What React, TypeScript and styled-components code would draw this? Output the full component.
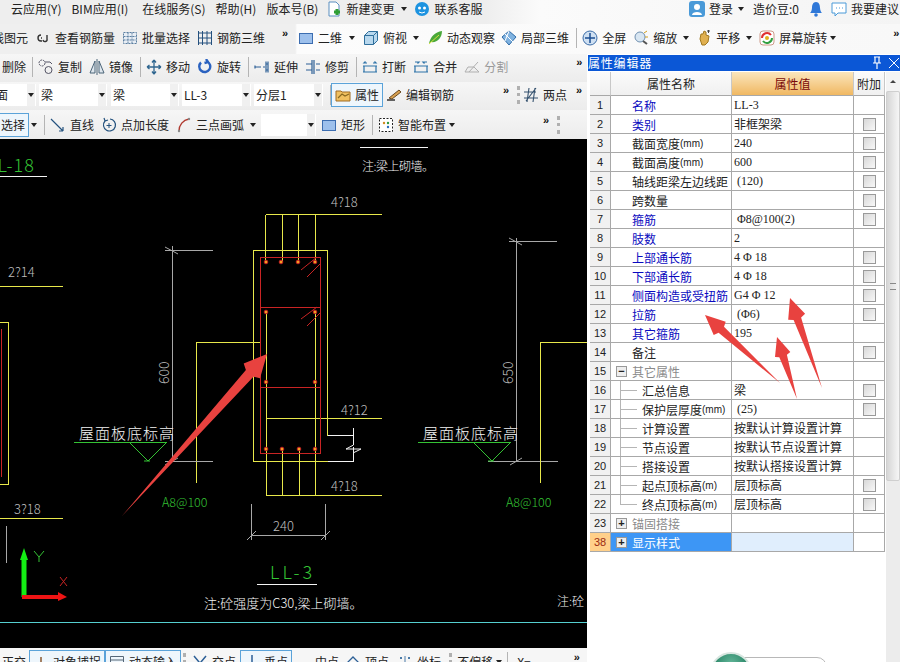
import React from "react";
import styled, { createGlobalStyle } from "styled-components";

const Global = createGlobalStyle`
  html, body { margin: 0; padding: 0; background: #fff; }
  body { font-family: "Noto Sans CJK SC", "Liberation Sans", sans-serif; font-size: 12px; color: #222; }
`;

const Page = styled.div`
  position: relative;
  width: 900px;
  height: 662px;
  overflow: hidden;
  background: #fff;
`;

const BarRow = styled.div<{ $h: number; $pb?: number; $bg?: string }>`
  display: flex;
  align-items: center;
  box-sizing: border-box;
  flex: none;
  height: ${(p) => p.$h}px;
  padding-bottom: ${(p) => p.$pb ?? 0}px;
  background: ${(p) => p.$bg ?? "linear-gradient(180deg,#f6f6f6,#ececec)"};
  white-space: nowrap;
  line-height: 16px;
`;

const RightGroup = styled.div`
  display: flex;
  align-items: center;
  margin-left: auto;
  padding-right: 1px;
`;

const ToolBtn = styled.div<{ $ml?: number; $pressed?: boolean; $muted?: boolean }>`
  display: inline-flex;
  flex: none;
  align-items: center;
  gap: 4px;
  box-sizing: border-box;
  margin-left: ${(p) => p.$ml ?? 0}px;
  color: ${(p) => (p.$muted ? "#9a9a9a" : "#222")};
  ${(p) =>
    p.$pressed
      ? "height:24px;padding:0 3px;border:1px solid #5ba3d9;background:#eef6fc;"
      : ""}
`;

const Caret = styled.span<{ $ml?: number }>`
  flex: none;
  width: 0;
  height: 0;
  margin-left: ${(p) => p.$ml ?? 0}px;
  border-left: 3px solid transparent;
  border-right: 3px solid transparent;
  border-top: 4px solid #222;
`;

const Chevron = styled.span<{ $ml?: number }>`
  flex: none;
  width: 8px;
  margin-left: ${(p) => p.$ml ?? 0}px;
  margin-bottom: 10px;
  font: bold 11px/10px "Liberation Sans", sans-serif;
  color: #111;
`;

const Sep = styled.span<{ $ml?: number }>`
  flex: none;
  width: 1px;
  height: 20px;
  margin-left: ${(p) => p.$ml ?? 0}px;
  background: #b4b4b4;
`;

const Grip = styled.span<{ $ml?: number }>`
  flex: none;
  width: 0;
  height: 18px;
  margin-left: ${(p) => p.$ml ?? 0}px;
  border-left: 3px dotted #b0b0b0;
`;

const Combo = styled.div<{ $ml?: number; $w: number }>`
  display: flex;
  flex: none;
  align-items: center;
  justify-content: space-between;
  box-sizing: border-box;
  width: ${(p) => p.$w}px;
  height: 22px;
  margin-left: ${(p) => p.$ml ?? 0}px;
  padding: 0 1px 0 2px;
  background: #fff;
`;

const ComboArrow = styled.span`
  display: flex;
  flex: none;
  align-items: center;
  justify-content: center;
  width: 8px;
  height: 22px;
  background: #f0f0f0;
`;

const Body = styled.div`
  display: flex;
  height: 608px;
`;

const LeftCol = styled.div`
  display: flex;
  flex: none;
  flex-direction: column;
  width: 587px;
`;

const CanvasBox = styled.div`
  flex: none;
  height: 509px;
  background: #000;
  overflow: hidden;
`;

const CadSvg = styled.svg`
  display: block;
  width: 587px;
  height: 509px;
`;

const CadText = styled.text<{ $c?: string; $s?: number; $ls?: number }>`
  fill: ${(p) => p.$c ?? "#bdbdbd"};
  font-family: "Noto Sans CJK SC", "Liberation Sans", sans-serif;
  font-size: ${(p) => p.$s ?? 13}px;
  font-weight: 300;
  letter-spacing: ${(p) => p.$ls ?? 0}px;
`;

const Panel = styled.div`
  display: flex;
  flex: none;
  flex-direction: column;
  width: 313px;
  padding: 1px 0 0 1px;
  box-sizing: border-box;
  background: #fff;
`;

const TitleBar = styled.div`
  display: flex;
  flex: none;
  align-items: center;
  justify-content: space-between;
  height: 16px;
  background: #0b57d6;
  color: #fff;
  font-size: 12px;
  line-height: 16px;
  letter-spacing: 0.8px;
  overflow: hidden;
`;

const TitleIcons = styled.div`
  display: flex;
  align-items: center;
  gap: 1px;
  margin-right: -2px;
`;

const PanelBody = styled.div`
  display: flex;
  flex: 1;
  margin-top: 1px;
  min-height: 0;
`;

const TableWrap = styled.div`
  flex: none;
  width: 297px;
  padding-left: 2px;
  box-sizing: border-box;
`;

const Row = styled.div<{ $h: number }>`
  display: grid;
  grid-template-columns: 21px 121px 122px 31px;
  height: ${(p) => p.$h}px;
`;

const NumCell = styled.div<{ $sel?: boolean; $head?: boolean }>`
  display: flex;
  align-items: center;
  justify-content: center;
  box-sizing: border-box;
  border-bottom: 1px solid #a8a8a8;
  border-right: 1px solid #a8a8a8;
  background: ${(p) => (p.$sel ? "#ffd08a" : "#f1f1f1")};
  color: ${(p) => (p.$sel ? "#9a2a10" : "#222")};
  font-family: "Liberation Sans", sans-serif;
  font-size: 11px;
`;

const NameCell = styled.div<{ $kind: string; $tree?: boolean; $last?: boolean; $sel?: boolean; $group?: boolean }>`
  position: relative;
  display: flex;
  align-items: center;
  box-sizing: border-box;
  padding-left: ${(p) => (p.$tree ? 31 : p.$group ? 5 : 21)}px;
  border-bottom: 1px solid #a8a8a8;
  border-right: 1px solid #a8a8a8;
  white-space: nowrap;
  background: ${(p) => (p.$sel ? "#3d96f5" : "#fff")};
  color: ${(p) =>
    p.$sel ? "#fff" : p.$kind === "blue" ? "#0a0ac0" : p.$kind === "gray" ? "#8a8a8a" : "#222"};
  ${(p) =>
    p.$tree
      ? `
    &::before { content:""; position:absolute; left:9px; top:0; height:${p.$last ? "50%" : "100%"}; border-left:1px solid #b5b5b5; }
    &::after { content:""; position:absolute; left:9px; top:50%; width:17px; border-top:1px solid #b5b5b5; }
  `
      : ""}
`;

const Unit = styled.span`
  font-family: "Liberation Sans", sans-serif;
  font-size: 10px;
`;

const ValCell = styled.div<{ $sel?: boolean }>`
  display: flex;
  align-items: center;
  box-sizing: border-box;
  padding-left: 2px;
  border-bottom: 1px solid #a8a8a8;
  border-right: 1px solid #a8a8a8;
  white-space: pre;
  font-family: "Liberation Serif", "Noto Sans CJK SC", serif;
  font-size: 12px;
  background: ${(p) => (p.$sel ? "#e0eefd" : "#fff")};
`;

const AddCell = styled.div`
  display: flex;
  align-items: center;
  justify-content: center;
  box-sizing: border-box;
  border-bottom: 1px solid #a8a8a8;
  border-right: 1px solid #a8a8a8;
`;

const Check = styled.span`
  box-sizing: border-box;
  width: 13px;
  height: 13px;
  border: 1px solid #9a9a9a;
  background: linear-gradient(135deg, #d8d8d8, #f8f8f8);
`;

const HeadCell = styled.div<{ $val?: boolean }>`
  display: flex;
  align-items: center;
  justify-content: center;
  box-sizing: border-box;
  border-bottom: 1px solid #a8a8a8;
  border-right: 1px solid #c8c8c8;
  background: ${(p) => (p.$val ? "linear-gradient(180deg,#fbe6bd,#f0b862)" : "linear-gradient(180deg,#fbfbfb,#f0f0f0)")};
  color: ${(p) => (p.$val ? "#7a0a0a" : "#222")};
`;

const ExpandBox = styled.span`
  display: flex;
  flex: none;
  align-items: center;
  justify-content: center;
  box-sizing: border-box;
  width: 11px;
  height: 11px;
  margin-right: 5px;
  border: 1px solid #999;
  background: #eee;
  color: #222;
  font: bold 11px/9px "Liberation Sans", sans-serif;
`;

const Scroll = styled.div`
  display: flex;
  flex: 1;
  flex-direction: column;
  margin-left: 1px;
  background: #ececec;
`;

const ScrollBtn = styled.div`
  display: flex;
  flex: none;
  align-items: center;
  justify-content: center;
  height: 19px;
  background: #f4f4f4;
`;

const ScrollUp = styled.span`
  width: 0;
  height: 0;
  border-left: 3px solid transparent;
  border-right: 3px solid transparent;
  border-bottom: 3px solid #444;
`;

const ScrollThumb = styled.div`
  display: flex;
  flex: none;
  align-items: center;
  justify-content: center;
  height: 390px;
  box-sizing: border-box;
  border: 1px solid #cfcfcf;
  border-radius: 2px;
  background: linear-gradient(90deg, #d6d6d6, #f6f6f6);
`;

const ThumbGrip = styled.span`
  width: 6px;
  height: 5px;
  border-top: 1px solid #888;
  border-bottom: 1px solid #888;
`;

const BallWidget = styled.div`
  position: absolute;
  left: 725px;
  top: 657px;
  width: 102px;
  height: 20px;
  box-sizing: border-box;
  border: 1px solid #b8b8b8;
  border-radius: 10px;
  background: #fff;
`;

const Ball = styled.div`
  position: absolute;
  left: 710px;
  top: 652px;
  width: 42px;
  height: 42px;
  box-sizing: border-box;
  border: 2px solid #d8e6e0;
  border-radius: 50%;
  background: radial-gradient(circle at 50% 25%, #62b598, #1f7d5e 60%);
`;

const Overlay = styled.svg`
  position: absolute;
  left: 0;
  top: 0;
  width: 900px;
  height: 662px;
  pointer-events: none;
`;

const IcoSvg = styled.svg`
  display: block;
  flex: none;
  width: 16px;
  height: 16px;
`;

const icons: Record<string, React.ReactNode> = {
  doc: (<><path d="M3 1h7l3 3v11H3z" fill="#fff" stroke="#5a8fc0" /><path d="M8 11h6M11 8v6" stroke="#2f9e35" strokeWidth="3" /></>),
  smile: (<><circle cx="8" cy="8" r="7" fill="#1d93e0" /><circle cx="5.5" cy="7" r="1.5" fill="#fff" /><circle cx="10.5" cy="7" r="1.5" fill="#fff" /><path d="M5 11q3 2 6 0" stroke="#fff" fill="none" /></>),
  link: (<path d="M6 5a3 3 0 1 0 0 6h1M6 8h1M12 5v4a2 2 0 0 1-4 1" fill="none" stroke="#333" strokeWidth="1.4" />),
  batch: (<path d="M1.500 2.500h13v11h-13zM1.500 6.500h13M1.500 10h13M6 2.500v11M10 2.500v11" fill="#e8eef5" stroke="#5a7ea0" strokeDasharray="2 1" />),
  rebar: (<path d="M1.500 3h13M1.500 13h13M1.500 1v14M5.500 1v14M10 1v14M14.500 1v14M1.500 8h13" fill="none" stroke="#24507e" />),
  plane: (<rect x="1.500" y="3.500" width="13" height="10" fill="#9dc0ec" stroke="#3c6db0" />),
  cube: (<><path d="M1.500 5.500l4-4h9v9l-4 4h-9z" fill="#b8d8ee" stroke="#2f6f9c" /><path d="M1.500 5.500h9v9M10.500 5.500l4-4" fill="none" stroke="#2f6f9c" /></>),
  orbit: (<><path d="M2 14C3 7 8 2 15 1c0 7-5 12-11 11z" fill="#4aa83a" /><path d="M2 14L12 5" stroke="#d8e040" /></>),
  local3d: (<><path d="M8 1l7 6-7 8-7-8z" fill="#7fb2e0" stroke="#2f6ca8" /><path d="M4 4l8 8M8 1l-4 10" stroke="#fff" /></>),
  full: (<><circle cx="8" cy="8" r="7" fill="#cfe0f2" stroke="#3c6da8" /><path d="M8 3v10M3 8h10" stroke="#1c4d92" strokeWidth="1.500" /></>),
  zoom: (<><circle cx="7" cy="7" r="5" fill="#d8e6f2" stroke="#7090b0" /><path d="M11 3l3-2M12 7h3" stroke="#d0a020" /><path d="M10 11l4 3" stroke="#555" strokeWidth="2" /></>),
  pan: (<><path d="M4 9l1-5 2 0 1-3 2 1 0 3 3 1-1 6-3 3H6z" fill="#e0b050" stroke="#a07820" /><path d="M11 1h3M12.500 0v3" stroke="#444" /></>),
  spin: (<><rect x="1" y="1" width="14" height="14" rx="3" fill="#fff" stroke="#c98" /><path d="M3 8a5 5 0 0 1 9-3" stroke="#e03030" strokeWidth="2" fill="none" /><path d="M13 8a5 5 0 0 1-9 3" stroke="#30a040" strokeWidth="2" fill="none" /><circle cx="8" cy="8" r="2" fill="#e0b020" /></>),
  copy: (<><circle cx="4" cy="4" r="3" fill="none" stroke="#556" strokeDasharray="2 1" /><circle cx="10.500" cy="11" r="3.500" fill="none" stroke="#556" /><path d="M7 3h5l2 2" stroke="#556" fill="none" /></>),
  mirror: (<><path d="M6 2L1 14h5zM10 2l5 12h-5z" fill="#dfe7ee" stroke="#4b6478" /><path d="M8 0v16" stroke="#4b6478" /></>),
  move: (<path d="M8 1v14M1 8h14M8 1L6 3.500M8 1l2 2.500M8 15l-2-2.500M8 15l2-2.500M1 8l2.500-2M1 8l2.500 2M15 8l-2.500-2M15 8l-2.500 2" fill="none" stroke="#2f6690" strokeWidth="1.300" />),
  rotate: (<path d="M4 3.500a5.500 5.500 0 1 0 6-1M9 0l2 3-3.500 1" fill="none" stroke="#2a62c0" strokeWidth="2.400" />),
  extend: (<path d="M1 8h6M9 8h2M12 2.500v11M14 2.500v11M12 5h2M12 11h2M1 6.500v3" fill="none" stroke="#2c5f96" strokeWidth="1.200" />),
  trim: (<path d="M1 5h6M1 11h6M7 1v14M9 1v14M11 5h4M11 11h4" fill="none" stroke="#2c5f96" strokeWidth="1.200" />),
  cut: (<path d="M1 7h14M1 13h14M5 4h-3l1.500-1.500M11 4h3l-1.500-1.500M2 7v6M14 7v6" fill="none" stroke="#2c72a8" strokeWidth="1.200" />),
  merge: (<path d="M1 7h14M1 13h14M2 3h4l-1.500 1.500M14 3h-4l1.500 1.500M2 7v6M14 7v6" fill="none" stroke="#2c72a8" strokeWidth="1.200" />),
  split: (<path d="M1 13h14l-5-5H4zM5 13L14 3" fill="#eee" stroke="#b0b0b0" />),
  prop: (<><path d="M1 4h5l1 1h8v9H1z" fill="#f0c060" stroke="#a06a20" /><path d="M3 11l4-4 3 2 4-2" stroke="#8a6a20" fill="none" strokeWidth="1.200" /></>),
  edit: (<><path d="M1 13h8" stroke="#333" strokeWidth="1.500" /><path d="M3 11L13 3l2 2L6 12z" fill="#d8a050" stroke="#6a4a20" /></>),
  two: (<path d="M1 11h14M1 5h12M4 15L6 1M10 15l2-14M13 1L3 14" fill="none" stroke="#34516e" strokeWidth="1.100" />),
  line: (<path d="M1 2l12 12M13 14v-4M13 14H9" fill="none" stroke="#24527e" strokeWidth="1.200" />),
  addlen: (<><path d="M4 4a6 6 0 1 0 5-2M3 1l1 3 3-1" fill="none" stroke="#24527e" strokeWidth="1.200" /><path d="M8 6v5M5.500 8.500h5" stroke="#24527e" /></>),
  arc: (<><path d="M3 14C3 8 7 3 13 2" fill="none" stroke="#b03a30" strokeWidth="1.400" /><circle cx="13" cy="2" r="1.200" fill="#8a8a8a" /><circle cx="3" cy="14" r="1.200" fill="#8a8a8a" /></>),
  smart: (<><rect x="1.500" y="1.500" width="13" height="13" fill="#fff" stroke="#222" strokeDasharray="2 1.500" /><circle cx="6" cy="6" r="1.200" fill="#d08a20" /><circle cx="10" cy="10" r="1.200" fill="#2a6cc0" /><circle cx="10" cy="6" r="1.200" fill="#2a9a40" /></>),
  user: (<><rect x="0" y="0" width="16" height="16" rx="3" fill="#4a9ad8" /><circle cx="8" cy="6" r="3" fill="#fff" /><path d="M3 14c0-4 10-4 10 0z" fill="#fff" /></>),
  bell: (<><path d="M8 1c-3 0-4 3-4 6s-2 5-2 5h12s-2-2-2-5-1-6-4-6z" fill="#2f78d8" /><circle cx="8" cy="14" r="1.800" fill="#2f78d8" /></>),
  chat: (<><path d="M1 2h14v10H7l-3 3v-3H1z" fill="#fff" stroke="#4a9ad8" /><path d="M5 7h1M8 7h1M11 7h1" stroke="#4a9ad8" /></>),
  snap: (<path d="M1 14h14M8 3v11M3 10h3M10 10h3" fill="none" stroke="#8a5a30" strokeWidth="1.500" />),
  input: (<path d="M1.500 2.500h13v11h-13zM1.500 6h13M1.500 9.500h13" fill="none" stroke="#567" />),
  cross: (<path d="M2 2l5 6-5 6M14 2L9 8l5 6" fill="none" stroke="#2c5f96" strokeWidth="1.500" />),
  perp: (<path d="M8 1v12M2 13h12" fill="none" stroke="#2c5f96" strokeWidth="1.500" />),
  mid: (<><path d="M1 11h14" stroke="#2c5f96" /><rect x="5" y="9" width="6" height="5" fill="#2c5f96" /></>),
  vertex: (<path d="M2 9l6-6 6 6v5H2z" fill="none" stroke="#2c5f96" strokeWidth="1.300" />),
  coord: (<path d="M8 2v12M3 14h10M3 3l2 2M5 3L3 5M11 3l2 2M13 3l-2 2" fill="none" stroke="#4a7aa8" />),
  pin: (<path d="M5 2h6M6 2v6M10 2v6M4 8h8M8 8v6" fill="none" stroke="#fff" strokeWidth="1.200" />),
  close: (<path d="M3 3l10 10M13 3L3 13" fill="none" stroke="#fff" strokeWidth="1" />),
};

const Ico = ({ n }: { n: string }) => <IcoSvg viewBox="0 0 16 16">{icons[n]}</IcoSvg>;

type ToolProps = { ml?: number; ic?: string; t?: string; pressed?: boolean; muted?: boolean };
const Tool = ({ ml, ic, t, pressed, muted }: ToolProps) => (
  <ToolBtn $ml={ml} $pressed={pressed} $muted={muted}>
    {ic && <Ico n={ic} />}
    {t && <span>{t}</span>}
  </ToolBtn>
);

const ComboBox = ({ ml, w, t }: { ml?: number; w: number; t?: string }) => (
  <Combo $ml={ml} $w={w}>
    <span>{t}</span>
    <ComboArrow>
      <Caret />
    </ComboArrow>
  </Combo>
);

type Prop = { v?: string; k?: string; c?: boolean; tree?: boolean; last?: boolean; group?: string; sel?: boolean; u?: string };
const rows: [string, string, Prop][] = [
  ["1", "名称", { v: "LL-3", k: "blue" }],
  ["2", "类别", { v: "非框架梁", k: "blue", c: true }],
  ["3", "截面宽度", { v: "240", c: true, u: "(mm)" }],
  ["4", "截面高度", { v: "600", c: true, u: "(mm)" }],
  ["5", "轴线距梁左边线距", { v: " (120)", c: true }],
  ["6", "跨数量", { c: true }],
  ["7", "箍筋", { v: " Φ8@100(2)", k: "blue", c: true }],
  ["8", "肢数", { v: "2", k: "blue" }],
  ["9", "上部通长筋", { v: "4 Φ 18", k: "blue", c: true }],
  ["10", "下部通长筋", { v: "4 Φ 18", k: "blue", c: true }],
  ["11", "侧面构造或受扭筋", { v: "G4 Φ 12", k: "blue", c: true }],
  ["12", "拉筋", { v: " (Φ6)", k: "blue", c: true }],
  ["13", "其它箍筋", { v: "195", k: "blue" }],
  ["14", "备注", { c: true }],
  ["15", "其它属性", { k: "gray", group: "−" }],
  ["16", "汇总信息", { v: "梁", c: true, tree: true }],
  ["17", "保护层厚度", { v: " (25)", c: true, tree: true, u: "(mm)" }],
  ["18", "计算设置", { v: "按默认计算设置计算", tree: true }],
  ["19", "节点设置", { v: "按默认节点设置计算", tree: true }],
  ["20", "搭接设置", { v: "按默认搭接设置计算", tree: true }],
  ["21", "起点顶标高", { v: "层顶标高", c: true, tree: true, u: "(m)" }],
  ["22", "终点顶标高", { v: "层顶标高", c: true, tree: true, last: true, u: "(m)" }],
  ["23", "锚固搭接", { k: "gray", group: "+" }],
  ["38", "显示样式", { group: "+", sel: true }],
];

const arrow = (tx: number, ty: number, x: number, y: number, head = 24, hw = 11, sw = 5) => {
  const len = Math.hypot(x - tx, y - ty);
  const dx = (x - tx) / len;
  const dy = (y - ty) / len;
  const px = -dy;
  const py = dx;
  const bx = x - dx * head;
  const by = y - dy * head;
  const nx = x - dx * head * 0.72;
  const ny = y - dy * head * 0.72;
  const pts = [
    [tx, ty],
    [bx + px * sw, by + py * sw],
    [nx - dx * 4 + px * hw, ny - dy * 4 + py * hw],
    [x, y],
    [nx - dx * 4 - px * hw, ny - dy * 4 - py * hw],
    [bx - px * sw, by - py * sw],
  ];
  return pts.map((q) => q.map((n) => n.toFixed(1)).join(",")).join(" ");
};

const Y = "#e8e84a";
const R = "#c92424";
const G = "#34c234";
const D = "#a8a8a8";

const rebarDots: [number, number][] = [
  [266, 262], [281, 262], [298, 262], [315, 262],
  [266, 312], [315, 312], [266, 382], [315, 382],
  [266, 449], [282, 449], [299, 449], [315, 449],
];

const Cad = () => (
  <CadSvg viewBox="0 139 587 509">
    <g fill="none" strokeWidth="1" shapeRendering="crispEdges">
      <path stroke={Y} d="M265.500 214.500H382M265.500 214.500V262M282 214.500V262M298.500 214.500V262M315.500 214.500V262" />
      <path stroke={Y} d="M327.500 435.500V250.500H253.500V461.500H327.500" />
      <path stroke={Y} d="M266 312V495M315.500 312V495M265.500 418.500H382M282 449V495M299 449V495M265.500 495.500H382" />
      <path stroke={Y} d="M196.500 483V342.500H260" />
      <path stroke={R} d="M260.500 257.500H320.500V453.500H260.500ZM260.500 307.500H320.500M260.500 387.500H320.500" />
      <path stroke="#f4f4f4" d="M327.500 435.500H353.500V428M327.500 461.500H353.500V447" />
      <path stroke={D} d="M172.500 246V461.500M165 250.500H213M165 461.500H213" />
      <path stroke={D} d="M516.500 238V461.500M509 241.500H557M488 461.500H558" />
      <path stroke={Y} d="M540.500 483V342.500H587" />
      <path stroke={D} d="M251.500 504V540M325.500 504V540M251 535.500H326" />
      <path stroke="#f4f4f4" d="M257 584.500H317M0 176.500H47M360 147.500H428" />
      <path stroke={Y} d="M0 286.500H63M0 518.500H63M0 322.500H8.500V484.500H0" />
      <path stroke={R} d="M1.500 329V477" />
      <path stroke={G} d="M74 442.500H167M418 442.500H511" />
      <path stroke={D} d="M6.500 526V563" />
      <path stroke="#55cfd0" d="M0 622.500H587" />
    </g>
    <g fill="none" strokeWidth="1">
      <path stroke="#f4f4f4" d="M353.500 428V445L346 449H361L353 453" />
      <path stroke={G} d="M129 442L148 461L167 442M144 461H150M473 442L492 461L511 442M488 461H494" />
      <path stroke={R} d="M301 270L317 257M307 277L320 264M301 319L317 307M307 326L320 313" />
      <path stroke={D} d="M165 247L178 254M165 465L178 458M509 238L522 245M510 465L522 458M247 540L256 531M321 540L330 531" />
    </g>
    {rebarDots.map(([x, y]) => (
      <circle key={`${x}-${y}`} cx={x} cy={y} r="1.800" fill="#f0a020" stroke={R} />
    ))}
    <path d="M24 548L28 560H26.500V597H21.500V560H20Z" fill="#14ee14" />
    <path d="M22 595H58V592L67 597L58 601V599H22Z" fill="#ee1414" />
    <path d="M34 551L39 557L44 551M39 557V562" fill="none" stroke={G} />
    <path d="M60 577L67 586M67 577L60 586" fill="none" stroke="#c92424" />
    <CadText x="-13" y="172" $c={G} $s={18} $ls={1}>LL-18</CadText>
    <CadText x="8" y="277">2?14</CadText>
    <CadText x="14" y="514">3?18</CadText>
    <CadText x="331" y="207">4?18</CadText>
    <CadText x="341" y="415">4?12</CadText>
    <CadText x="331" y="491">4?18</CadText>
    <CadText x="273" y="531">240</CadText>
    <CadText transform="translate(169 384) rotate(-90)" $s={14}>600</CadText>
    <CadText transform="translate(513 384) rotate(-90)" $s={14}>650</CadText>
    <CadText x="79" y="439" $c="#f4f4f4" $s={15} $ls={1}>屋面板底标高</CadText>
    <CadText x="423" y="439" $c="#f4f4f4" $s={15} $ls={1}>屋面板底标高</CadText>
    <CadText x="162" y="507" $c={G} $s={12.500}>A8@100</CadText>
    <CadText x="506" y="507" $c={G} $s={12.500}>A8@100</CadText>
    <CadText x="270" y="579" $c={G} $s={18} $ls={3}>LL-3</CadText>
    <CadText x="204" y="608" $c="#f4f4f4" $s={13}>注:砼强度为C30,梁上砌墙。</CadText>
    <CadText x="362" y="171" $c="#f4f4f4" $s={12} $ls={-0.500}>注:梁上砌墙。</CadText>
    <CadText x="557" y="606" $c="#f4f4f4" $s={12}>注:砼</CadText>
  </CadSvg>
);

export default function App() {
  return (
    <Page>
      <Global />
      <BarRow $h={24} $pb={6} $bg="linear-gradient(90deg,#eeeeee 0,#eeeeee 54%,#fbfbfb 60%,#f4f4f4 100%)">
        <Tool ml={11} t="云应用(Y)" />
        <Tool ml={10} t="BIM应用(I)" />
        <Tool ml={14} t="在线服务(S)" />
        <Tool ml={10} t="帮助(H)" />
        <Tool ml={10} t="版本号(B)" />
        <Tool ml={8} ic="doc" t="新建变更" />
        <Caret $ml={7} />
        <Tool ml={7} ic="smile" t="联系客服" />
        <RightGroup>
          <Tool ic="user" t="登录" />
          <Caret $ml={5} />
          <Tool ml={9} t="造价豆:0" />
          <Tool ml={9} ic="bell" />
          <Tool ml={7} ic="chat" t="我要建议" />
        </RightGroup>
      </BarRow>
      <BarRow $h={30} $pb={2} $bg="linear-gradient(90deg,#efefef 0,#efefef 32.800%,#fcfcfc 33%,#f8f8f8 100%)">
        <Tool ml={-8} t="线图元" />
        <Tool ml={7} ic="link" t="查看钢筋量" />
        <Tool ml={7} ic="batch" t="批量选择" />
        <Tool ml={7} ic="rebar" t="钢筋三维" />
        <Chevron $ml={17}>»</Chevron>
        <Tool ml={8} ic="plane" t="二维" />
        <Caret $ml={7} />
        <Tool ml={8} ic="cube" t="俯视" />
        <Caret $ml={6} />
        <Tool ml={8} ic="orbit" t="动态观察" />
        <Tool ml={6} ic="local3d" t="局部三维" />
        <Sep $ml={7} />
        <Tool ml={5} ic="full" t="全屏" />
        <Tool ml={7} ic="zoom" t="缩放" />
        <Caret $ml={6} />
        <Tool ml={7} ic="pan" t="平移" />
        <Caret $ml={6} />
        <Tool ml={7} ic="spin" t="屏幕旋转" />
        <Caret $ml={3} />
        <Chevron $ml={57}>»</Chevron>
      </BarRow>
      <Body>
        <LeftCol>
          <BarRow $h={28} $pb={2}>
            <Tool ml={2} t="删除" />
            <Sep $ml={6} />
            <Tool ml={5} ic="copy" t="复制" />
            <Tool ml={7} ic="mirror" t="镜像" />
            <Sep $ml={7} />
            <Tool ml={5} ic="move" t="移动" />
            <Tool ml={7} ic="rotate" t="旋转" />
            <Sep $ml={7} />
            <Tool ml={5} ic="extend" t="延伸" />
            <Tool ml={7} ic="trim" t="修剪" />
            <Sep $ml={7} />
            <Tool ml={5} ic="cut" t="打断" />
            <Tool ml={7} ic="merge" t="合并" />
            <Tool ml={7} ic="split" t="分割" muted />
            <Chevron $ml={68}>»</Chevron>
          </BarRow>
          <BarRow $h={28} $pb={2}>
            <ComboBox ml={-6} w={42} t="面" />
            <ComboBox ml={3} w={68} t="梁" />
            <ComboBox ml={4} w={68} t="梁" />
            <ComboBox ml={3} w={69} t="LL-3" />
            <ComboBox ml={3} w={69} t="分层1" />
            <Sep $ml={7} />
            <Tool pressed ic="prop" t="属性" />
            <Tool ml={3} ic="edit" t="编辑钢筋" />
            <Chevron $ml={49}>»</Chevron>
            <Grip $ml={6} />
            <Tool ml={3} ic="two" t="两点" />
            <Chevron $ml={9}>»</Chevron>
          </BarRow>
          <BarRow $h={29}>
            <Tool ml={-3} pressed t="选择" />
            <Caret $ml={2} />
            <Sep $ml={7} />
            <Tool ml={5} ic="line" t="直线" />
            <Tool ml={7} ic="addlen" t="点加长度" />
            <Tool ml={7} ic="arc" t="三点画弧" />
            <Caret $ml={6} />
            <ComboBox ml={5} w={55} />
            <Tool ml={5} ic="plane" t="矩形" />
            <Sep $ml={7} />
            <Tool ml={5} ic="smart" t="智能布置" />
            <Caret $ml={3} />
            <Chevron $ml={88}>»</Chevron>
            <Grip $ml={6} />
          </BarRow>
          <CanvasBox>
            <Cad />
          </CanvasBox>
          <BarRow $h={28} $bg="#f6f6f6">
            <Tool ml={2} t="正交" />
            <Tool ml={3} pressed ic="snap" t="对象捕捉" />
            <Tool pressed ic="input" t="动态输入" />
            <Grip $ml={2} />
            <Tool ml={6} ic="cross" t="交点" />
            <Tool ml={4} pressed ic="perp" t="垂点" />
            <Tool ml={3} ic="mid" t="中点" />
            <Tool ml={6} ic="vertex" t="顶点" />
            <Tool ml={8} ic="coord" t="坐标" />
            <Grip $ml={8} />
            <Tool ml={5} t="不偏移" />
            <Caret $ml={3} />
            <Sep $ml={5} />
            <Tool ml={9} t="X=" />
            <Chevron $ml={43}>»</Chevron>
          </BarRow>
        </LeftCol>
        <Panel>
          <TitleBar>
            <span>属性编辑器</span>
            <TitleIcons>
              <Ico n="pin" />
              <Ico n="close" />
            </TitleIcons>
          </TitleBar>
          <PanelBody>
            <TableWrap>
              <Row $h={24}>
                <HeadCell />
                <HeadCell>属性名称</HeadCell>
                <HeadCell $val>属性值</HeadCell>
                <HeadCell>附加</HeadCell>
              </Row>
              {rows.map(([num, name, p]) => (
                <Row $h={19} key={num}>
                  <NumCell $sel={p.sel}>{num}</NumCell>
                  <NameCell $kind={p.k ?? "black"} $tree={p.tree} $last={p.last} $sel={p.sel} $group={!!p.group}>
                    {p.group && <ExpandBox>{p.group}</ExpandBox>}
                    {name}
                    {p.u && <Unit>{p.u}</Unit>}
                  </NameCell>
                  <ValCell $sel={p.sel}>{p.v}</ValCell>
                  <AddCell>{p.c && <Check />}</AddCell>
                </Row>
              ))}
            </TableWrap>
            <Scroll>
              <ScrollBtn>
                <ScrollUp />
              </ScrollBtn>
              <ScrollThumb>
                <ThumbGrip />
              </ScrollThumb>
            </Scroll>
          </PanelBody>
        </Panel>
      </Body>
      <BallWidget />
      <Ball />
      <Overlay viewBox="0 0 900 662">
        <polygon fill="#e8423f" points={arrow(122, 516, 267, 354, 26, 11, 5)} />
        <polygon fill="#e8423f" points={arrow(780, 383, 705, 315, 22, 9, 4)} />
        <polygon fill="#e8423f" points={arrow(797, 399, 777, 337, 20, 8, 4)} />
        <polygon fill="#e8423f" points={arrow(822, 388, 790, 298, 22, 9, 4)} />
      </Overlay>
    </Page>
  );
}
